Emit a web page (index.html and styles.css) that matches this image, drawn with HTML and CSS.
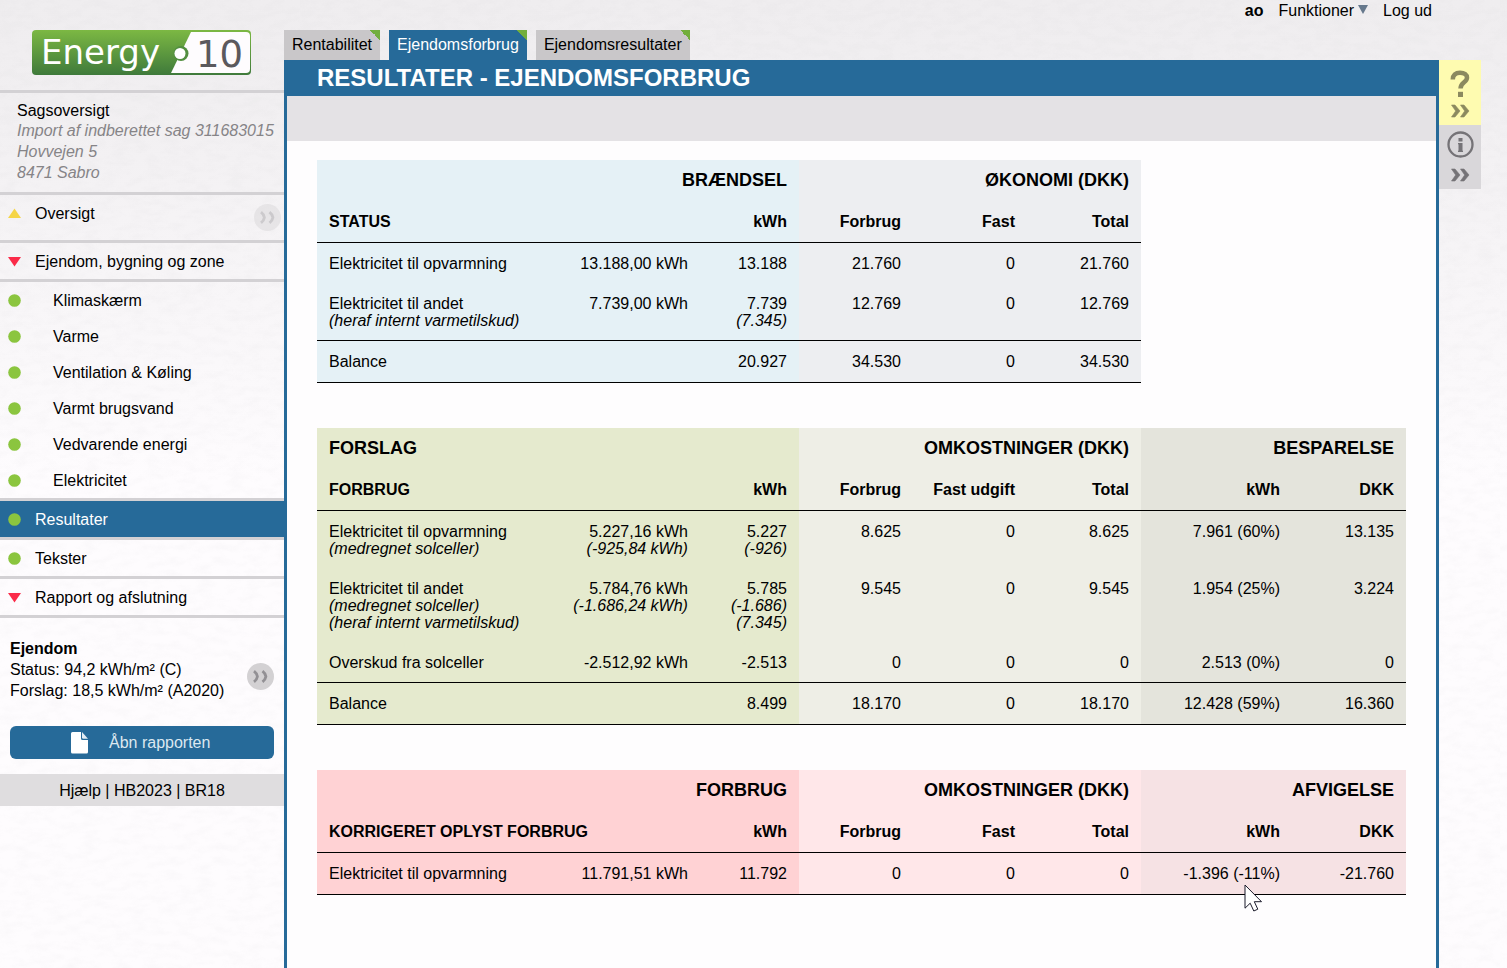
FILE: index.html
```html
<!DOCTYPE html>
<html lang="da">
<head>
<meta charset="utf-8">
<title>Energy10 - Resultater</title>
<link rel="stylesheet" href="styles.css">
</head>
<body>
<svg class="sprites" width="0" height="0" aria-hidden="true">
  <symbol id="dot" viewBox="0 0 13 13"><circle cx="6.5" cy="6.5" r="6.3" fill="#8bc53f"/></symbol>
  <symbol id="down" viewBox="0 0 13 13"><path d="M0 2h13L6.500 11.500z" fill="#fb2b49"/></symbol>
  <symbol id="up" viewBox="0 0 13 13"><path d="M0 11h13L6.500 1.500z" fill="#f5d547"/></symbol>
  <symbol id="chevrons" viewBox="0 0 27 27">
    <circle cx="13.500" cy="13.500" r="13.500" fill="#d3d1d3"/>
    <path d="M7 8.200q3 2.300 3.400 5.300-.4 3-3.400 5.300M15.500 8.200q3 2.300 3.400 5.300-.4 3-3.400 5.300" fill="none" stroke="#929094" stroke-width="2.800"/>
  </symbol>
  <symbol id="more" viewBox="0 0 20 14">
    <path d="M1.500 1H5l5 6-5 6H1.500l4.200-6zM10.500 1H14l5 6-5 6h-3.500l4.200-6z" fill="currentColor" stroke="currentColor" stroke-width=".6"/>
  </symbol>
</svg>

<div class="page">
  <aside class="sidebar">
    <a class="logo" href="#" aria-label="Energy10">
      <svg width="220" height="45" viewBox="0 0 220 45">
        <defs>
          <linearGradient id="green" x1="0" y1="0" x2="0" y2="1">
            <stop offset="0" stop-color="#7cb843"/><stop offset="1" stop-color="#3f7a3b"/>
          </linearGradient>
        </defs>
        <rect width="219" height="45" rx="4" fill="url(#green)"/>
        <path d="M159 2h55q4 0 4 4v33q0 4-4 4h-75z" fill="#fefcfe"/>
        <circle cx="149" cy="23.500" r="7.500" fill="#528f40"/>
        <circle cx="148" cy="23.500" r="5.500" fill="#fff"/>
        <text x="9" y="34" class="logo-word">Energy</text>
        <text x="164" y="37" class="logo-number">10</text>
      </svg>
    </a>

    <section class="case">
      <a href="#">Sagsoversigt</a>
      <p>Import af indberettet sag 311683015<br>Hovvejen 5<br>8471 Sabro</p>
    </section>

    <nav class="menu">
      <div class="item overview">
        <svg class="mark"><use href="#up"/></svg><a href="#">Oversigt</a>
        <button class="round faded" aria-label="Vis oversigt"><svg><use href="#chevrons"/></svg></button>
      </div>
      <a class="item" href="#"><svg class="mark"><use href="#down"/></svg>Ejendom, bygning og zone</a>
      <div class="submenu">
        <a class="item sub" href="#"><svg class="mark"><use href="#dot"/></svg>Klimaskærm</a>
        <a class="item sub" href="#"><svg class="mark"><use href="#dot"/></svg>Varme</a>
        <a class="item sub" href="#"><svg class="mark"><use href="#dot"/></svg>Ventilation &amp; Køling</a>
        <a class="item sub" href="#"><svg class="mark"><use href="#dot"/></svg>Varmt brugsvand</a>
        <a class="item sub" href="#"><svg class="mark"><use href="#dot"/></svg>Vedvarende energi</a>
        <a class="item sub" href="#"><svg class="mark"><use href="#dot"/></svg>Elektricitet</a>
      </div>
      <a class="item active" href="#"><svg class="mark"><use href="#dot"/></svg>Resultater</a>
      <a class="item" href="#"><svg class="mark"><use href="#dot"/></svg>Tekster</a>
      <a class="item" href="#"><svg class="mark"><use href="#down"/></svg>Rapport og afslutning</a>
    </nav>

    <section class="property">
      <div>
        <strong>Ejendom</strong>
        <p>Status: 94,2 kWh/m² (C)<br>Forslag: 18,5 kWh/m² (A2020)</p>
      </div>
      <button class="round" aria-label="Vis ejendom"><svg><use href="#chevrons"/></svg></button>
    </section>

    <button class="report">
      <svg width="18" height="22" viewBox="0 0 18 22">
        <path d="M1.500 0H10v6.500q0 1.500 1.500 1.500H17v12q0 1.500-1.500 1.500h-14Q0 21.500 0 20V1.500Q0 0 1.500 0z" fill="#fff"/>
        <path d="M11 0l6 6.800h-4.500Q11 6.800 11 5.500z" fill="#e4edf4"/>
      </svg>
      <span>Åbn rapporten</span>
    </button>

    <footer class="links"><a href="#">Hjælp</a> | <a href="#">HB2023</a> | <a href="#">BR18</a></footer>
  </aside>

  <div class="workspace">
    <header class="top">
      <nav class="tabs">
        <a class="tab" href="#">Rentabilitet</a>
        <a class="tab current" href="#">Ejendomsforbrug</a>
        <a class="tab" href="#">Ejendomsresultater</a>
      </nav>
      <div class="user">
        <strong>ao</strong>
        <a class="functions" href="#">Funktioner<svg width="10" height="9" viewBox="0 0 10 9"><path d="M0 0h10L5 9z" fill="#66788c"/></svg></a>
        <a href="#">Log ud</a>
      </div>
    </header>

    <main class="panel">
      <h1>RESULTATER - EJENDOMSFORBRUG</h1>
      <div class="toolbar"></div>
      <div class="content">

        <table class="results status">
          <colgroup class="tone-a"><col><col class="quantity"><col class="energy"></colgroup>
          <colgroup class="tone-b"><col class="money"><col class="money"><col class="money"></colgroup>
          <thead>
            <tr class="group"><th colspan="3">BRÆNDSEL</th><th colspan="3">ØKONOMI (DKK)</th></tr>
            <tr class="ruled"><th>STATUS</th><th></th><th>kWh</th><th>Forbrug</th><th>Fast</th><th>Total</th></tr>
          </thead>
          <tbody>
            <tr><td>Elektricitet til opvarmning</td><td>13.188,00 kWh</td><td>13.188</td><td>21.760</td><td>0</td><td>21.760</td></tr>
            <tr class="ruled"><td>Elektricitet til andet<br><em>(heraf internt varmetilskud)</em></td><td>7.739,00 kWh</td><td>7.739<br><em>(7.345)</em></td><td>12.769</td><td>0</td><td>12.769</td></tr>
            <tr class="ruled balance"><td>Balance</td><td></td><td>20.927</td><td>34.530</td><td>0</td><td>34.530</td></tr>
          </tbody>
        </table>

        <table class="results proposal">
          <colgroup class="tone-a"><col><col class="quantity"><col class="energy"></colgroup>
          <colgroup class="tone-b"><col class="money"><col class="money"><col class="money"></colgroup>
          <colgroup class="tone-c"><col class="saving"><col class="money"></colgroup>
          <thead>
            <tr class="group"><th class="left" colspan="3">FORSLAG</th><th colspan="3">OMKOSTNINGER (DKK)</th><th colspan="2">BESPARELSE</th></tr>
            <tr class="ruled"><th>FORBRUG</th><th></th><th>kWh</th><th>Forbrug</th><th>Fast udgift</th><th>Total</th><th>kWh</th><th>DKK</th></tr>
          </thead>
          <tbody>
            <tr><td>Elektricitet til opvarmning<br><em>(medregnet solceller)</em></td><td>5.227,16 kWh<br><em>(-925,84 kWh)</em></td><td>5.227<br><em>(-926)</em></td><td>8.625</td><td>0</td><td>8.625</td><td>7.961 (60%)</td><td>13.135</td></tr>
            <tr><td>Elektricitet til andet<br><em>(medregnet solceller)</em><br><em>(heraf internt varmetilskud)</em></td><td>5.784,76 kWh<br><em>(-1.686,24 kWh)</em></td><td>5.785<br><em>(-1.686)</em><br><em>(7.345)</em></td><td>9.545</td><td>0</td><td>9.545</td><td>1.954 (25%)</td><td>3.224</td></tr>
            <tr class="ruled"><td>Overskud fra solceller</td><td>-2.512,92 kWh</td><td>-2.513</td><td>0</td><td>0</td><td>0</td><td>2.513 (0%)</td><td>0</td></tr>
            <tr class="ruled balance"><td>Balance</td><td></td><td>8.499</td><td>18.170</td><td>0</td><td>18.170</td><td>12.428 (59%)</td><td>16.360</td></tr>
          </tbody>
        </table>

        <table class="results corrected">
          <colgroup class="tone-a"><col><col class="quantity"><col class="energy"></colgroup>
          <colgroup class="tone-b"><col class="money"><col class="money"><col class="money"></colgroup>
          <colgroup class="tone-c"><col class="saving"><col class="money"></colgroup>
          <thead>
            <tr class="group"><th colspan="3">FORBRUG</th><th colspan="3">OMKOSTNINGER (DKK)</th><th colspan="2">AFVIGELSE</th></tr>
            <tr class="ruled"><th colspan="2">KORRIGERET OPLYST FORBRUG</th><th>kWh</th><th>Forbrug</th><th>Fast</th><th>Total</th><th>kWh</th><th>DKK</th></tr>
          </thead>
          <tbody>
            <tr class="ruled balance"><td>Elektricitet til opvarmning</td><td>11.791,51 kWh</td><td>11.792</td><td>0</td><td>0</td><td>0</td><td class="pointed">-1.396 (-11%)<svg class="cursor" width="19" height="28" viewBox="0 0 19 28"><path d="M1 1v23.200l5.200-5 3.600 7.800 4-1.800-3.500-7.500h7.200z" fill="#fff" stroke="#1b1b2b" stroke-width="1"/></svg></td><td>-21.760</td></tr>
          </tbody>
        </table>

      </div>
    </main>
  </div>

  <aside class="rail">
    <button class="help" aria-label="Hjælp">
      <svg width="20" height="27" viewBox="0 0 20 27" fill="none" stroke="currentColor" stroke-width="4.500"><path d="M2.800 9.500C2.800 5 5.500 2.800 10 2.800s7 2 7 5c0 4.700-6.500 4.500-6.500 10.700"/><path d="M10.500 21.800V27" stroke-width="5"/></svg>
      <svg width="20" height="14"><use href="#more"/></svg>
    </button>
    <button class="info" aria-label="Information">
      <svg width="27" height="27" viewBox="0 0 27 27" fill="none" stroke="currentColor"><circle cx="13.500" cy="13.500" r="12" stroke-width="2.300"/><path d="M13.500 7v3.500M13.500 12v9" stroke-width="4"/><path d="M11 12.600h2M11 20.400h5" stroke-width="1.300"/></svg>
      <svg width="20" height="14"><use href="#more"/></svg>
    </button>
  </aside>
</div>
</body>
</html>
```

FILE: styles.css
```css
* { box-sizing: border-box; }

body {
  margin: 0;
  background-color: #fdfbfd;
  background-image:
    url("data:image/svg+xml,%3Csvg xmlns='http://www.w3.org/2000/svg' width='300' height='300'%3E%3Cfilter id='p'%3E%3CfeTurbulence type='fractalNoise' baseFrequency='.06 .14' numOctaves='3' stitchTiles='stitch'/%3E%3CfeColorMatrix values='0 0 0 0 .4 0 0 0 0 .4 0 0 0 0 .42 .1 0 0 0 -.04'/%3E%3C/filter%3E%3Crect width='300' height='300' filter='url(%23p)'/%3E%3C/svg%3E"),
    linear-gradient(#efedef 0, #f1eff1 100px, #fefcfe 480px);
  background-repeat: repeat, no-repeat;
  color: #000;
  font: 16px/21px "Liberation Sans", Arial, sans-serif;
}

a { color: inherit; text-decoration: none; }
p { margin: 0; }
button { border: 0; padding: 0; background: none; font: inherit; color: inherit; cursor: pointer; }
svg { display: block; flex: none; }
.sprites { position: absolute; }

.page {
  display: grid;
  grid-template-columns: 284px 1fr 42px;
  min-height: 100vh;
  padding-right: 26px;
}

/* Sidebar */
.logo { display: block; padding: 30px 0 15px 32px; }
.logo-word { font: 34px "DejaVu Sans", sans-serif; fill: #fff; }
.logo-number { font: 37px "DejaVu Sans", sans-serif; fill: #5b595d; }

.case {
  border: solid #d3d1d4;
  border-width: 3px 0;
  padding: 8px 0 9px 17px;
  white-space: nowrap;
}
.case a { display: block; line-height: 19px; }
.case p { color: #868487; font-style: italic; }

.item {
  display: flex;
  align-items: center;
  height: 39px;
  padding-left: 8px;
  border-bottom: 3px solid #d3d1d4;
}
.mark { width: 13px; height: 13px; margin-right: 14px; }
.overview { height: 48px; align-items: flex-start; padding-top: 8px; padding-right: 3px; }
.overview .mark { margin-top: 4px; }
.overview .round { margin-left: auto; margin-top: 1px; }
.submenu { border-bottom: 3px solid #d3d1d4; }
.sub { height: 36px; border-bottom: 0; }
.sub .mark { margin-right: 32px; }
.active { background: #266a99; background-clip: padding-box; color: #fff; }

.round, .round svg { width: 27px; height: 27px; }
.faded { opacity: .4; }

.property {
  display: flex;
  align-items: center;
  justify-content: space-between;
  padding: 21px 10px 25px;
}
.property strong { display: block; line-height: 20px; }
.property .round { margin-top: 12px; }

.report {
  display: flex;
  align-items: center;
  gap: 20px;
  width: calc(100% - 20px);
  height: 33px;
  margin: 0 10px;
  padding-left: 61px;
  border-radius: 6px;
  background: #266a99;
  color: #dce8f0;
}

.links { margin-top: 15px; padding: 6px 0 5px; background: #dfdddf; text-align: center; }

/* Header */
.workspace { display: flex; flex-direction: column; min-width: 0; }
.top { display: flex; justify-content: space-between; height: 60px; }
.tabs { display: flex; align-items: flex-end; gap: 9px; }
.tab {
  height: 30px;
  padding: 4px 8px;
  background: linear-gradient(45deg, transparent 50%, #72ae3c 50%) top right / 10px 10px no-repeat #c9c7c9;
}
.current { background-color: #266a99; color: #fff; }
.user { display: flex; gap: 15px; padding-right: 7px; }
.functions { display: flex; gap: 4px; }
.functions svg { margin-top: 5px; }

/* Panel */
.panel { flex: 1; border: solid #266a99; border-width: 0 3px; background: #fefdfe; }
h1 {
  margin: 0;
  padding: 0 30px 1px;
  background: #266a99;
  color: #fff;
  font-size: 24px;
  line-height: 35px;
}
.toolbar { height: 45px; background: #e4e2e5; }
.content { display: flex; flex-direction: column; gap: 45px; padding: 19px 30px; }

/* Result tables */
.results { width: 100%; table-layout: fixed; border-collapse: separate; border-spacing: 0; line-height: 17px; }
.results.status { width: calc(100% - 265px); }
.quantity { width: 150px; }
.energy { width: 99px; }
.money { width: 114px; }
.saving { width: 151px; }

.results th, .results td {
  padding: 12px 12px 11px;
  text-align: right;
  vertical-align: top;
  white-space: nowrap;
}
.results tr > :first-child { text-align: left; }
.results .group > * { padding-bottom: 12px; font-size: 18px; }
.results .group > :first-child:not(.left) { text-align: right; }
.results .ruled > * { border-bottom: 1px solid #000; }
.results th, .results .balance > td { padding-bottom: 12px; }

.status .tone-a { background: #e5f1f6; }
.status .tone-b { background: #edeef1; }
.proposal .tone-a { background: #e5eace; }
.proposal .tone-b { background: #eeeee6; }
.proposal .tone-c { background: #e4e4dc; }
.corrected .tone-a { background: #ffd2d4; }
.corrected .tone-b { background: #ffe7e9; }
.corrected .tone-c { background: #f6e2e4; }

.pointed { position: relative; }
.cursor { position: absolute; top: 31px; right: 29px; }

/* Right rail */
.rail { padding-top: 60px; }
.rail button {
  display: flex;
  flex-direction: column;
  align-items: center;
  justify-content: flex-start;
  width: 100%;
}
.rail .help { height: 65px; padding-top: 10px; gap: 7px; background: #fefbb0; color: #8b895f; }
.rail .info { height: 64px; padding-top: 6px; gap: 10px; background: #d9d7da; color: #757377; }
```
